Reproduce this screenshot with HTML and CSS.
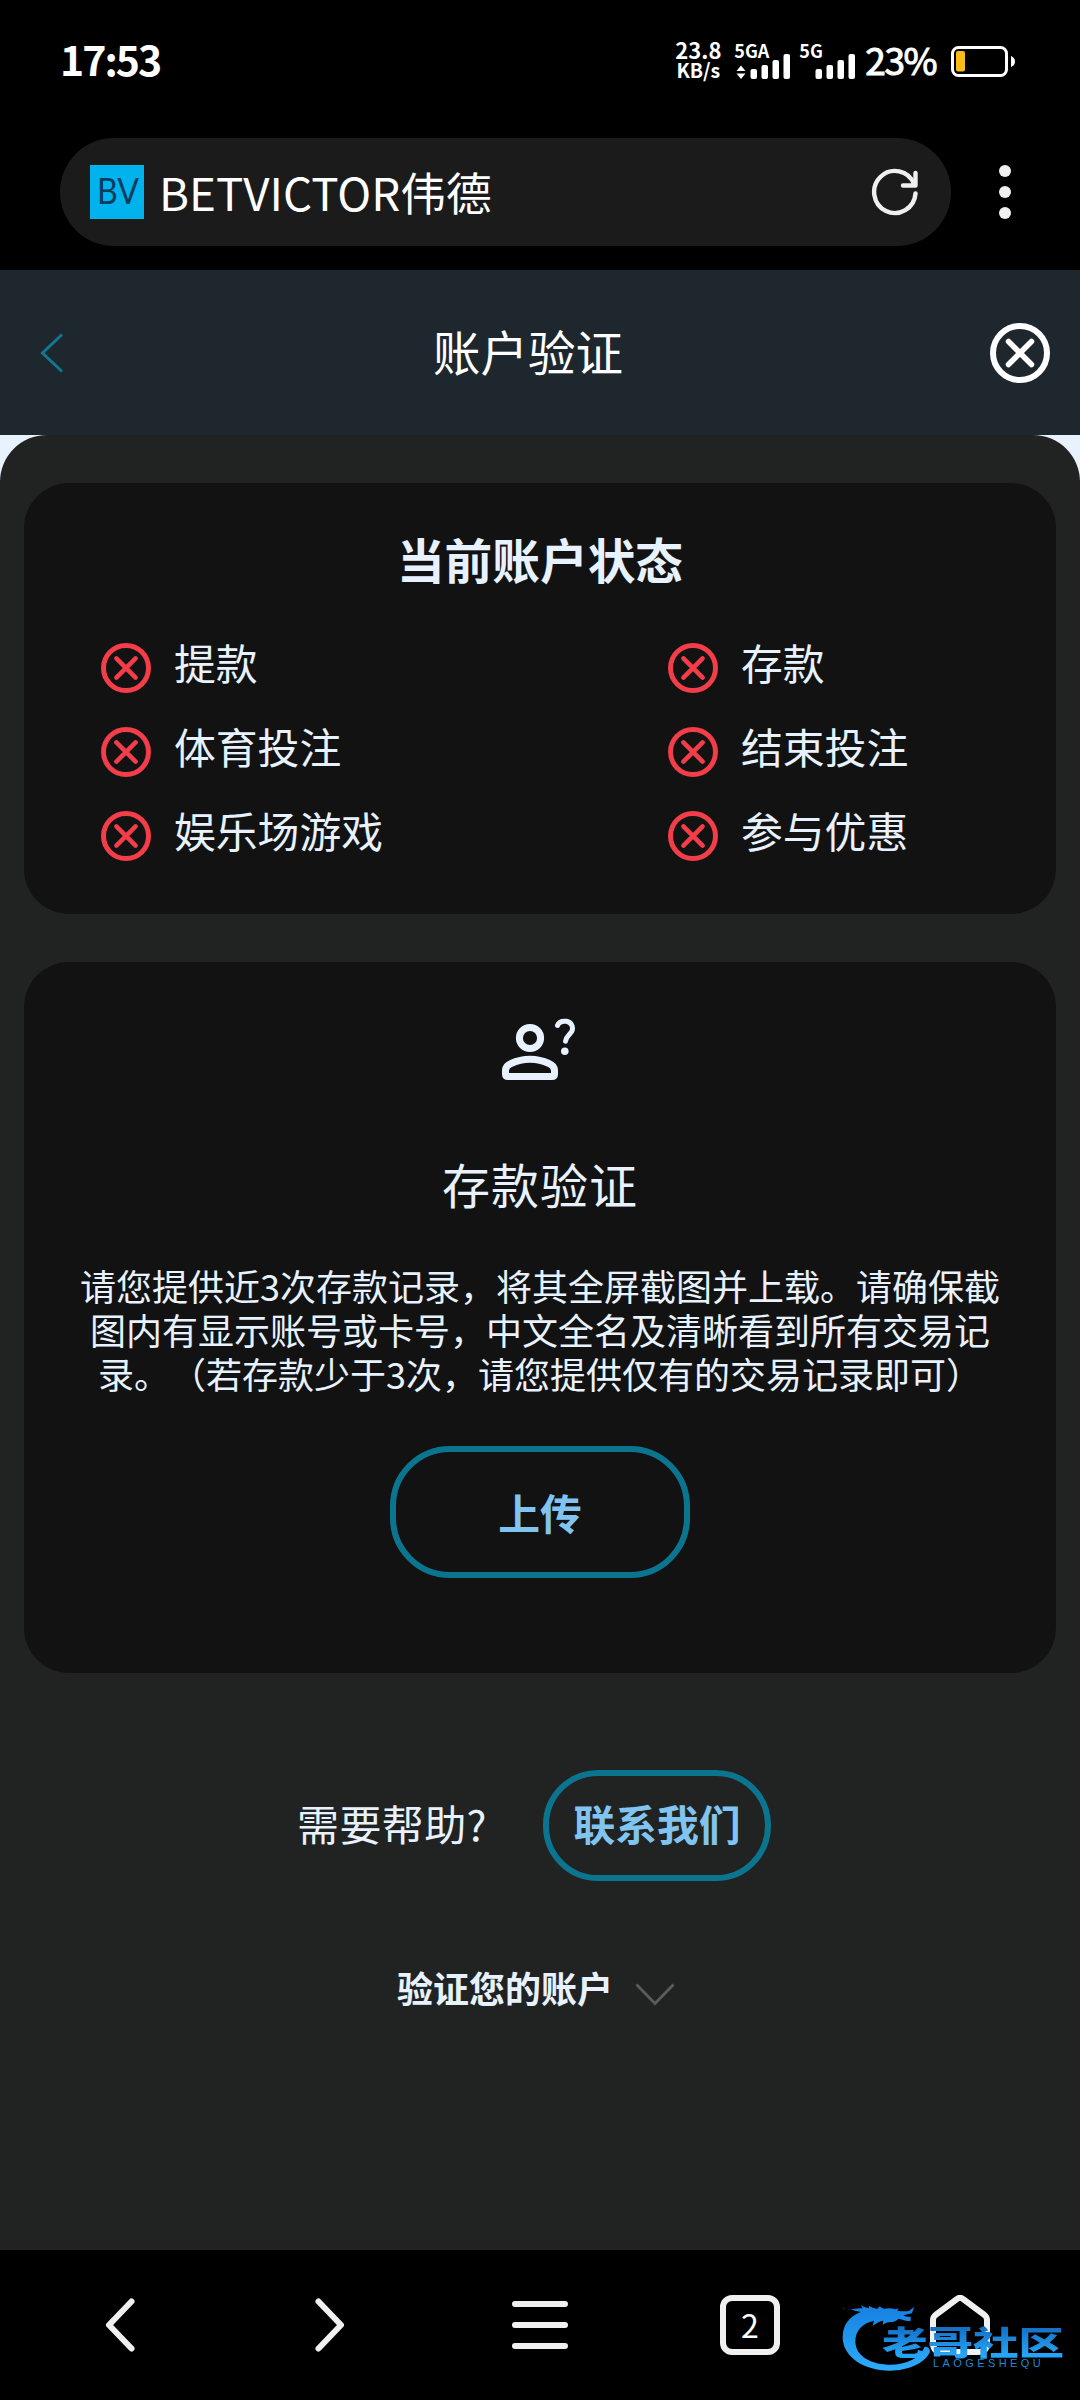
FILE: index.html
```html
<!DOCTYPE html>
<html lang="zh-CN">
<head>
<meta charset="utf-8">
<title>账户验证</title>
<link rel="stylesheet" href="styles.css">
</head>
<body>
<svg class="defs" aria-hidden="true">
  <symbol id="cross" viewBox="0 0 60 60">
    <circle cx="30" cy="30" r="27" fill="none" stroke="currentColor" stroke-width="6"/>
    <path d="M18.500 18.500 41.500 41.500M41.500 18.500 18.500 41.500" fill="none" stroke="currentColor" stroke-width="5.500" stroke-linecap="round"/>
  </symbol>
</svg>
<div class="screen">
  <div class="status">
    <span class="time">17:53</span>
    <div class="status-right">
      <div class="speed"><span class="speed-num">23.8</span><span class="speed-unit">KB/s</span></div>
      <div class="signal signal-a">
        <span class="net">5GA</span>
        <svg width="57" height="26" viewBox="0 0 57 26" fill="#fff"><path d="M2.500 18 7 12.500 11.500 18zM2.500 20.500 7 26 11.500 20.500z"/><rect x="16.500" y="16" width="6.500" height="10" rx="2"/><rect x="27.500" y="12" width="6.500" height="14" rx="2"/><rect x="38.500" y="7" width="6.500" height="19" rx="2"/><rect x="49.500" y="1" width="6.500" height="25" rx="2"/></svg>
      </div>
      <div class="signal signal-b">
        <span class="net">5G</span>
        <svg width="57" height="26" viewBox="0 0 57 26" fill="#fff"><rect x="16.500" y="16" width="6.500" height="10" rx="2"/><rect x="27.500" y="12" width="6.500" height="14" rx="2"/><rect x="38.500" y="7" width="6.500" height="19" rx="2"/><rect x="49.500" y="1" width="6.500" height="25" rx="2"/></svg>
      </div>
      <span class="percent">23%</span>
      <svg class="battery" width="65" height="32" viewBox="0 0 65 32"><rect x="1.500" y="2.500" width="54" height="28" rx="6" fill="none" stroke="#fff" stroke-width="3"/><rect x="5" y="6" width="9" height="20.500" rx="2" fill="#fbbc16"/><path d="M60 11q4 1.500 4 5.500t-4 5.500z" fill="#fff"/></svg>
    </div>
  </div>

  <div class="browser">
    <div class="address">
      <svg class="favicon" width="54" height="54" viewBox="0 0 54 54"><rect width="54" height="54" fill="#00b3ec"/><text class="favicon-text" x="28" y="39" text-anchor="middle" textLength="42" lengthAdjust="spacingAndGlyphs">BV</text></svg>
      <span class="site">BETVICTOR伟德</span>
      <svg class="reload" width="48" height="48" viewBox="0 0 48 48" fill="none" stroke="#f0f0f0" stroke-width="4.400" stroke-linecap="round" stroke-linejoin="round"><path d="M44.500 25.500A20.700 21 0 1 1 43 16"/><path d="M44.500 5V17.500H32"/></svg>
    </div>
    <svg class="dots" width="12" height="56" viewBox="0 0 12 56" fill="#f0f0f0"><circle cx="6" cy="7" r="6"/><circle cx="6" cy="28" r="6"/><circle cx="6" cy="49" r="6"/></svg>
  </div>

  <header class="header">
    <svg class="back" width="24" height="40" viewBox="0 0 24 40" fill="none" stroke="#12788f" stroke-width="3"><path d="M22 1.500 2.500 20 22 38.500"/></svg>
    <h1 class="header-title">账户验证</h1>
    <svg class="close" width="60" height="60"><use href="#cross"/></svg>
  </header>

  <main class="main">
    <div class="panel">
      <section class="card status-card">
        <h2 class="card-title">当前账户状态</h2>
        <div class="grid">
          <div class="item"><svg class="bad" width="50" height="50"><use href="#cross"/></svg><span>提款</span></div>
          <div class="item"><svg class="bad" width="50" height="50"><use href="#cross"/></svg><span>存款</span></div>
          <div class="item"><svg class="bad" width="50" height="50"><use href="#cross"/></svg><span>体育投注</span></div>
          <div class="item"><svg class="bad" width="50" height="50"><use href="#cross"/></svg><span>结束投注</span></div>
          <div class="item"><svg class="bad" width="50" height="50"><use href="#cross"/></svg><span>娱乐场游戏</span></div>
          <div class="item"><svg class="bad" width="50" height="50"><use href="#cross"/></svg><span>参与优惠</span></div>
        </div>
      </section>

      <section class="card verify-card">
        <svg class="person" width="78" height="64" viewBox="0 0 78 64" fill="none" stroke="#e8f2ff" stroke-linecap="round" stroke-linejoin="round">
          <circle cx="30" cy="20" r="10.600" stroke-width="7"/>
          <path d="M5.500 56V52Q6 47.500 11 45.500 20 41.300 30 41.300T49 45.500Q54 47.500 54.500 52V56Q54.500 58.500 52 58.500H8Q5.500 58.500 5.500 56Z" stroke-width="7"/>
          <path d="M57.500 7.500C59 3.500 63 2.800 66.500 3.300c5 1 7.500 6 5 10.500-2 3.300-5.500 4.500-6 9.500" stroke-width="5"/>
          <circle cx="64.800" cy="33.300" r="3.800" fill="#e8f2ff" stroke="none"/>
        </svg>
        <h2 class="verify-title">存款验证</h2>
        <p class="desc">请您提供近3次存款记录，将其全屏截图并上载。请确保截<br>图内有显示账号或卡号，中文全名及清晰看到所有交易记<br>录。（若存款少于3次，请您提供仅有的交易记录即可）</p>
        <button class="btn upload">上传</button>
      </section>

      <div class="help"><span>需要帮助?</span><button class="btn contact">联系我们</button></div>
      <div class="more"><span>验证您的账户</span><svg width="40" height="24" viewBox="0 0 40 24" fill="none" stroke="#5a5c5b" stroke-width="2.800"><path d="M1.500 1.500 20 20.500 38.500 1.500"/></svg></div>
    </div>
  </main>

  <nav class="nav">
    <svg width="60" height="60" viewBox="0 0 60 60"><path d="M41.500 6.500 19 30 41.500 53.500"/></svg>
    <svg width="60" height="60" viewBox="0 0 60 60"><path d="M18.500 6.500 41 30 18.500 53.500"/></svg>
    <svg width="60" height="60" viewBox="0 0 60 60"><path d="M5 9H55M5 30H55M5 51H55"/></svg>
    <span class="tabs">2</span>
    <svg width="60" height="60" viewBox="0 0 60 60"><path d="M3 25q0-3 2.500-5L27 4q3-2.500 6 0L54.500 20q2.500 2 2.500 5V48q0 9-9 9H12q-9 0-9-9z"/></svg>
    <div class="watermark">
      <svg class="dragon" width="94" height="77" viewBox="720 240 282 231">
        <defs><linearGradient id="wm" x1="0" y1="0" x2="0" y2="1"><stop offset="0" stop-color="#1680e0"/><stop offset="1" stop-color="#2cacfa"/></linearGradient></defs>
        <path fill="url(#wm)" d="M726 264q20 8 38 2 12-2 24-1l-6-10q12 8 24 10l2-8q10 9 24 9l8-8q2 7 12 8 20-4 34 2l10-3-4 7q22 4 36 0l14-12-6 20-26 6q8 6 22 4v12q-12 2-22-2l-14-4q-10 10-26 10-12 0-22 8l2-12q-16 2-32 16l4-16c-36 8-56 30-56 62 0 42 42 68 96 70 54 2 98-18 112-54q16 0 16 16c-16 34-66 56-120 56-80 0-142-42-142-100 0-36 18-62 54-76l-36-8q-18 0-20-4z"/>
      </svg>
      <span class="wm-name">老哥社区</span>
      <span class="wm-latin">LAOGESHEQU</span>
    </div>
  </nav>
</div>
</body>
</html>
```
FILE: styles.css
```css
* { box-sizing: border-box; }
body {
  margin: 0;
  background: #000;
  color: #e8f2ff;
  font-family: "Noto Sans CJK SC", "Noto Sans", sans-serif;
  text-spacing-trim: space-all;
}
h1, h2, p { margin: 0; font-weight: 400; }
svg { display: block; flex: none; }
span { white-space: nowrap; }
.defs { position: absolute; width: 0; height: 0; }
.screen { width: 1080px; height: 2400px; overflow: hidden; display: flex; flex-direction: column; }

.status {
  height: 120px;
  padding: 0 64px 0 60px;
  display: flex;
  justify-content: space-between;
  color: #fff;
}
.time { font-size: 41px; font-weight: 700; line-height: 60px; margin-top: 28px; letter-spacing: -2px; }
.status-right { display: flex; align-items: flex-start; }
.speed { width: 46px; margin: 39px 13px 0 0; display: flex; flex-direction: column; align-items: center; font-weight: 700; }
.speed-num { font-size: 22px; line-height: 21px; }
.speed-unit { font-size: 19.500px; line-height: 20px; }
.signal { width: 57px; margin-top: 40px; display: flex; flex-direction: column; }
.signal svg { margin-top: -7px; }
.net { font-size: 18px; line-height: 20px; font-weight: 700; height: 20px; }
.signal-b { margin-left: 8px; }
.percent { margin: 29px 15px 0 9px; font-size: 37px; line-height: 60px; letter-spacing: -1.500px; -webkit-text-stroke: 1px #fff; }
.battery { margin-top: 45px; }

.browser { height: 150px; padding: 18px 69px 24px 60px; display: flex; justify-content: space-between; align-items: center; }
.address {
  width: 891px;
  height: 108px;
  padding: 0 32px 0 30px;
  border-radius: 54px;
  background: #1b1b1b;
  display: flex;
  align-items: center;
}
.favicon-text { font: 36px "Lato", sans-serif; fill: #063c60; }
.site { margin: -3px 0 0 15px; flex: 1; font-size: 45.700px; line-height: 60px; color: #fff; }

.header { height: 165px; padding: 0 30px 0 40px; display: flex; align-items: center; justify-content: space-between; background: #1e272e; }
.header-title { flex: 1; margin-top: -3px; text-align: center; padding-right: 24px; font-size: 47.500px; line-height: 60px; color: #fff; }
.back { margin-right: 26px; }
.close { color: #fff; }

.main { height: 1815px; background: linear-gradient(#e8f2ff 45px, #212322 45px); }
.panel { height: 1815px; padding: 48px 24px 0; border-radius: 47px 47px 0 0; background: #212322; }
.card { border-radius: 45px; background: #121212; display: flex; flex-direction: column; align-items: center; }
.status-card { height: 431px; padding-top: 46px; }
.card-title { font-size: 47.700px; line-height: 60px; font-weight: 700; }
.grid { align-self: stretch; margin: 54px 0 0 77px; display: grid; grid-template-columns: 567px 1fr; grid-auto-rows: 84px; align-items: start; font-size: 41.800px; line-height: 50px; }
.item { display: flex; gap: 23px; align-items: flex-start; }
.item span { margin-top: -6px; }
.bad { color: #f33d48; }

.verify-card { height: 711px; margin-top: 48px; padding-top: 56px; }
.person { margin-right: 2px; }
.verify-title { margin-top: 71px; font-size: 48px; line-height: 60px; letter-spacing: 1px; }
.desc { margin-top: 50px; font-size: 36px; line-height: 44px; text-align: center; white-space: nowrap; }
.btn { border: 6px solid #0b7590; background: none; color: #80c4ef; font-family: inherit; font-size: 41.800px; font-weight: 700; line-height: 50px; padding: 0; }
.upload { width: 300px; height: 132px; margin-top: 51px; border-radius: 60px; }
.help { margin-top: 97px; margin-left: 273px; height: 111px; display: flex; align-items: center; font-size: 42px; line-height: 50px; }
.help span { width: 246px; margin-top: -5px; letter-spacing: .4px; }
.contact { width: 228px; height: 111px; border-radius: 55px; padding-bottom: 5px; }
.more { margin: 81px 0 0 373px; display: flex; align-items: center; gap: 22px; font-size: 36px; line-height: 50px; font-weight: 700; }
.more svg { margin-top: 15px; }

.nav { position: relative; height: 150px; padding: 0 90px; display: flex; align-items: center; justify-content: space-between; }
.nav > svg { fill: none; stroke: #f0f0f0; stroke-width: 6; stroke-linecap: round; stroke-linejoin: round; }
.tabs { width: 60px; height: 60px; border: 6px solid #f0f0f0; border-radius: 12px; color: #fff; font-size: 32px; line-height: 46px; text-align: center; }
.watermark { position: absolute; left: 840px; top: 50px; width: 230px; height: 80px; }
.dragon { position: absolute; left: 0; top: 0; }
.wm-name {
  position: absolute;
  left: 42px;
  top: 22px;
  font-size: 33px;
  line-height: 38px;
  font-weight: 900;
  transform: scaleX(1.38);
  transform-origin: 0 0;
  background: linear-gradient(#1470c4 15%, #26a4f6 85%);
  background-clip: text;
  color: transparent;
}
.wm-latin { position: absolute; left: 93px; top: 57px; font: 11px/12px "Liberation Sans", sans-serif; letter-spacing: 3.400px; color: #1f86d2; }
```
